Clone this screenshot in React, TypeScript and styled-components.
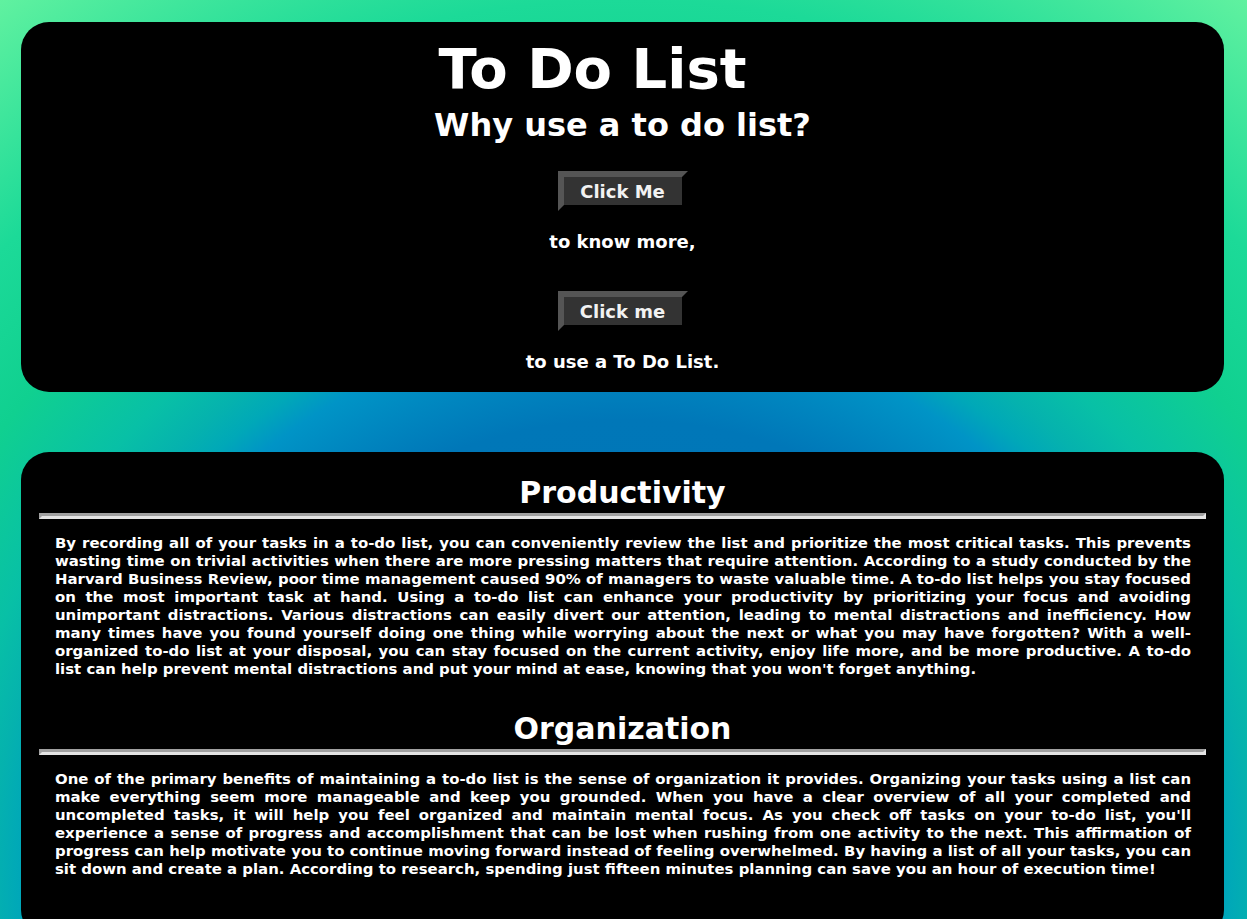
import React from 'react';
import styled, { createGlobalStyle } from 'styled-components';

const GlobalStyle = createGlobalStyle`
  html {
    background: radial-gradient(
      circle at 50% 900px,
      #0072b4 0px,
      #0077b8 480px,
      #0094c6 575px,
      #00a8b8 605px,
      #05b2ae 635px,
      #08c0a6 680px,
      #10d090 780px,
      #1cda98 900px,
      #62f2a0 1100px
    );
    min-height: 100%;
  }
  body {
    margin: 0;
    padding: 22px 23px 40px 21px;
    font-family: 'DejaVu Sans', Verdana, sans-serif;
    font-weight: bold;
    color: #fff;
  }
`;

const Card = styled.section`
  background: #000;
  border-radius: 28px;
`;

const Hero = styled(Card)`
  display: flex;
  flex-direction: column;
  align-items: center;
  text-align: center;
  padding: 14px 0 20px;
`;

const Title = styled.h1`
  margin: 0;
  padding-right: 60px;
  font-size: 56px;
  line-height: 65px;
`;

const Subtitle = styled.h2`
  margin: 6px 0 0;
  font-size: 32px;
  line-height: 37px;
`;

const ActionButton = styled.button<{ $gap: number }>`
  margin-top: ${(p) => p.$gap}px;
  width: 130px;
  height: 40px;
  padding: 0;
  background: #333;
  color: #f2f2f2;
  font-family: inherit;
  font-weight: bold;
  font-size: 18px;
  border: 6px solid;
  border-color: #555 #000 #000 #555;
  cursor: pointer;
`;

const Caption = styled.p`
  margin: 20px 0 0;
  font-size: 18px;
  line-height: 21px;
`;

const Info = styled(Card)`
  margin-top: 60px;
  padding: 23px 0 60px;
`;

const Topic = styled.article`
  & + & {
    margin-top: 33px;
  }
`;

const TopicTitle = styled.h2`
  margin: 0;
  text-align: center;
  font-size: 30px;
  line-height: 35px;
`;

const Rule = styled.hr`
  margin: 3px 18px 15px;
  height: 0;
  border-style: solid;
  border-width: 3px;
  border-color: #a0a0a0 #e4e4e4 #e4e4e4 #a0a0a0;
`;

const Body = styled.p`
  margin: 0 33px 0 34px;
  font-size: 14.92px;
  line-height: 18px;
  text-align: justify;
`;

const topics = [
  {
    title: 'Productivity',
    text: "By recording all of your tasks in a to-do list, you can conveniently review the list and prioritize the most critical tasks. This prevents wasting time on trivial activities when there are more pressing matters that require attention. According to a study conducted by the Harvard Business Review, poor time management caused 90% of managers to waste valuable time. A to-do list helps you stay focused on the most important task at hand. Using a to-do list can enhance your productivity by prioritizing your focus and avoiding unimportant distractions. Various distractions can easily divert our attention, leading to mental distractions and inefficiency. How many times have you found yourself doing one thing while worrying about the next or what you may have forgotten? With a well-organized to-do list at your disposal, you can stay focused on the current activity, enjoy life more, and be more productive. A to-do list can help prevent mental distractions and put your mind at ease, knowing that you won't forget anything.",
  },
  {
    title: 'Organization',
    text: "One of the primary benefits of maintaining a to-do list is the sense of organization it provides. Organizing your tasks using a list can make everything seem more manageable and keep you grounded. When you have a clear overview of all your completed and uncompleted tasks, it will help you feel organized and maintain mental focus. As you check off tasks on your to-do list, you'll experience a sense of progress and accomplishment that can be lost when rushing from one activity to the next. This affirmation of progress can help motivate you to continue moving forward instead of feeling overwhelmed. By having a list of all your tasks, you can sit down and create a plan. According to research, spending just fifteen minutes planning can save you an hour of execution time!",
  },
];

export default function App() {
  return (
    <>
      <GlobalStyle />
      <Hero>
        <Title>To Do List</Title>
        <Subtitle>Why use a to do list?</Subtitle>
        <ActionButton $gap={27}>Click Me</ActionButton>
        <Caption>to know more,</Caption>
        <ActionButton $gap={39}>Click me</ActionButton>
        <Caption>to use a To Do List.</Caption>
      </Hero>
      <Info>
        {topics.map((t) => (
          <Topic key={t.title}>
            <TopicTitle>{t.title}</TopicTitle>
            <Rule />
            <Body>{t.text}</Body>
          </Topic>
        ))}
      </Info>
    </>
  );
}
